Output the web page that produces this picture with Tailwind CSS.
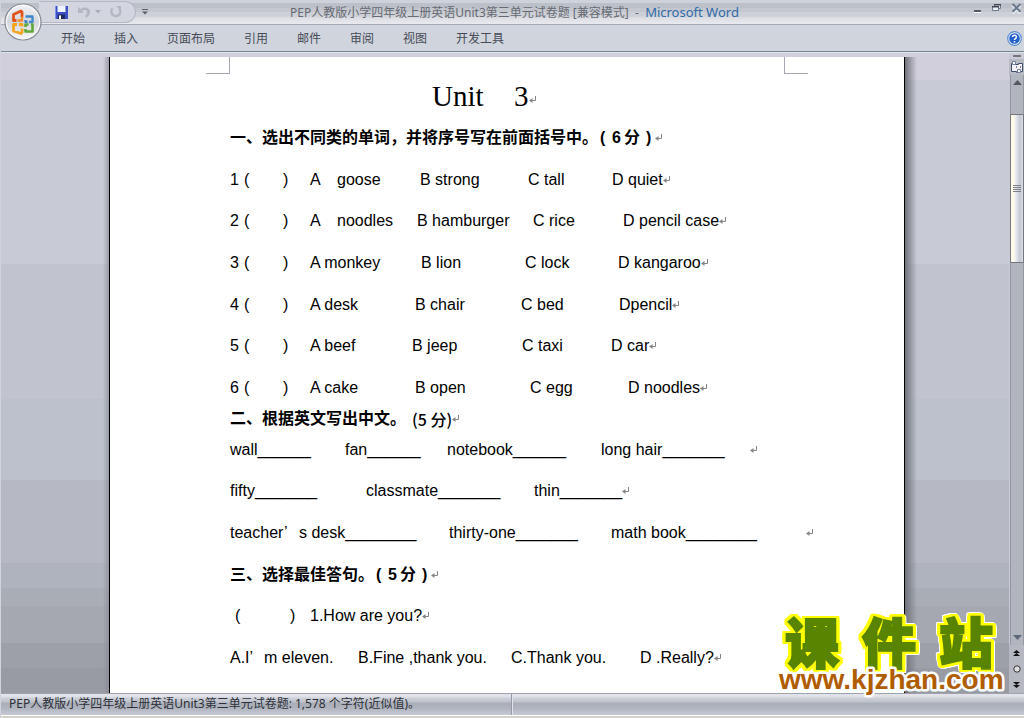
<!DOCTYPE html>
<html lang="zh-CN">
<head>
<meta charset="utf-8">
<title>PEP人教版小学四年级上册英语Unit3第三单元试卷题 - Microsoft Word</title>
<script src="https://cdn.jsdelivr.net/npm/@tailwindcss/browser@4"></script>
</head>
<body class="relative flex h-screen flex-col overflow-hidden bg-[#d0d4dd] pl-px font-['Noto_Sans','Noto_Sans_CJK_SC',sans-serif] text-xs text-[#464b57]">

<svg class="hidden" aria-hidden="true">
  <symbol id="ret" viewBox="0 0 8 8"><path d="M6.500 0v4.500H2" fill="none" stroke="#858585"/><path d="M0 4.500 3.500 2v5z" fill="#858585"/></symbol>
</svg>

<!-- Office button -->
<button aria-label="Office 按钮" class="absolute left-1 top-[3px] z-10 size-[38px]">
  <svg viewBox="0 0 38 38" class="size-full">
    <defs>
      <linearGradient id="orb" x1="0" y1="0" x2="0" y2="1"><stop offset="0" stop-color="#f2f3f5"/><stop offset=".5" stop-color="#d3d6dc"/><stop offset=".75" stop-color="#e6e7ea"/><stop offset="1" stop-color="#f8f8f9"/></linearGradient>
    </defs>
    <circle cx="19" cy="19" r="18" fill="url(#orb)" stroke="#878b94" stroke-width="1.2"/>
    <circle cx="19" cy="19" r="16.6" fill="none" stroke="#f7f8fa" stroke-width="1.2"/>
    <g fill="none" stroke-linejoin="round">
      <path d="M12.500 17.500H9.500v-6L17 8l1 1v5" stroke="#e0521c" stroke-width="2.800"/>
      <path d="M18 13.500v4h-4.500" stroke="#f08a2b" stroke-width="2.400"/>
      <path d="M21.500 13.500h7v5.500h-3.500m-3.500-2v2h2" stroke="#3f86cc" stroke-width="2.300"/>
      <path d="M13 21.500H9.500v6.500l7.500 2.500 1-1v-4m0-2v-2h-3" stroke="#f3a51f" stroke-width="2.800"/>
      <path d="M21.500 24v-2.500h3m2.500 0h1.500v7h-7v-2.500" stroke="#5fa83a" stroke-width="2.600"/>
    </g>
  </svg>
</button>

<!-- Title bar -->
<header class="flex h-[25px] shrink-0 items-start border-b border-[#a6aab4] bg-[linear-gradient(#ced2da_0_3px,#bcc0c8_3px_8px,#c4c7ce_8px_12px,#cdd0d6_12px_16px,#dcdee3_18px,#e9eaef_24px)]">
  <div class="mt-px ml-[38px] flex h-[22px] w-[97px] shrink-0 items-center rounded-r-full border border-[#b4b8c2] border-l-transparent bg-[#d3d6de] pl-[14px]">
    <button aria-label="保存"><svg class="size-[15px]" viewBox="0 0 15 15"><path d="M1 1h13v13H2l-1-1z" fill="#3a4fc4"/><path d="M3.500 1h8v6h-8z" fill="#eef2ff"/><path d="M4 9.500h7V14H4z" fill="#20285e"/><path d="M5 10.500h2V14H5z" fill="#fff"/><path d="M1 1h1v12H1z" fill="#7f90ea"/></svg></button>
    <button aria-label="撤消" class="ml-2"><svg class="size-[14px]" viewBox="0 0 14 14"><path d="M1 2v6h6L5 6c3-2 5-1 5 1s-1 3-2 4l1 2c3-2 4-4 4-6 0-4-5-6-9-3z" fill="#b3b7c4"/></svg></button>
    <button aria-label="撤消选项" class="ml-1"><svg class="h-1 w-[6px]" viewBox="0 0 6 4"><path d="M0 0h6L3 3.500z" fill="#a8acb8"/></svg></button>
    <button aria-label="重复" class="ml-2"><svg class="size-[14px]" viewBox="0 0 14 14"><path d="M7 1h5v5l-1.500-1.500" fill="#b3b7c4"/><path d="M3.500 3.500a4.500 4.500 0 1 0 7 .5" fill="none" stroke="#b3b7c4" stroke-width="2.500"/></svg></button>
  </div>
  <button aria-label="自定义快速访问工具栏" class="mt-[9px] ml-[6px]"><svg class="block size-[6px]" viewBox="0 0 6 6"><path d="M0 0h6v1H0zM0 2.500h6L3 5.500z" fill="#5a5e68"/></svg></button>
  <h1 class="flex-1 pl-[2px] text-center text-xs leading-[25px] whitespace-pre text-[#666a73]">PEP人教版小学四年级上册英语Unit3第三单元试卷题 [兼容模式]  -  <span class="text-[13px] text-[#2f6aab]">Microsoft Word</span></h1>
  <div class="flex w-[145px] shrink-0 items-start justify-end gap-[9px] pt-[3px] pr-[2px]">
    <button aria-label="最小化"><svg class="h-3 w-2" viewBox="0 0 8 12"><path d="M0 7h7v2H0z" fill="#555a66"/><path d="M0 9h7v1H0z" fill="#fff"/></svg></button>
    <button aria-label="还原"><svg class="h-3 w-[11px]" viewBox="0 0 11 12"><path d="M3.500 1.500h6v4h-6z" fill="#dde1ea" stroke="#6c7a90"/><path d="M3 1h7v1.500H3z" fill="#454955"/><path d="M1.500 3.500h6v4h-6z" fill="#eef0f5" stroke="#6c7a90"/><path d="M1 3h7v1.500H1z" fill="#454955"/></svg></button>
    <button aria-label="关闭"><svg class="h-3 w-[11px]" viewBox="0 0 11 12"><path d="M1.500 2l8 8m0-8l-8 8" stroke="#fff" stroke-width="2.500"/><path d="M1.500 1l8 8m0-8l-8 8" stroke="#6b7890" stroke-width="2.200"/></svg></button>
  </div>
</header>

<!-- Ribbon tabs -->
<nav class="flex h-[28px] shrink-0 items-center gap-[29px] border-b border-[#dde7ea] pr-[2px] pl-[60px] shadow-[inset_0_-1px_#7c838c]">
  <button>开始</button><button>插入</button><button>页面布局</button><button>引用</button><button>邮件</button><button>审阅</button><button>视图</button><button>开发工具</button>
  <button aria-label="帮助" class="ml-auto"><svg class="size-[15px]" viewBox="0 0 15 15"><circle cx="7.500" cy="7.500" r="6.800" fill="#e6f0fb" stroke="#5b8fd0" stroke-width="1.200"/><circle cx="7.500" cy="7.500" r="5.300" fill="#2360cf"/><path d="M5.500 6c0-2.500 4-2.500 4 0 0 1.300-2 1.300-2 3" fill="none" stroke="#fff" stroke-width="1.500"/><path d="M6.700 10h1.600v1.500H6.700z" fill="#fff"/></svg></button>
</nav>

<!-- Workspace -->
<div class="flex min-h-0 flex-1">
  <main class="flex min-w-0 flex-1 bg-[linear-gradient(#d1cfdb_0_27px,#c8cbd5_27px_211px,#c1c4ce_211px_346px,#bcc1cb_346px_427px,#b6b9c3_427px_510px,#afb3bd_510px_535px,#a9adb6_535px_553px,#a5a8b1_553px_590px,#9ea0a9_590px_615px,#999ba4_615px)] pt-1 pl-1">
    <div class="ml-auto w-3 bg-linear-to-r from-transparent from-50% to-[#858894]/70"></div>
    <article class="w-[796px] shrink-0 border-x border-black bg-white pr-[72px] pl-24 font-['Liberation_Sans','Noto_Sans_CJK_SC',sans-serif] text-base leading-5 text-black">
      <div class="flex h-[18px] items-start justify-between pr-6" aria-hidden="true">
        <div class="h-[17px] w-6 border-r border-b border-[#a5a7b3]"></div>
        <div class="h-[17px] w-6 border-b border-l border-[#a5a7b3]"></div>
      </div>
      <div class="pl-6 whitespace-nowrap">
        <h2 class="flex h-[42px] items-center pl-[202px] font-['Liberation_Serif',serif] text-[29px]"><span class="w-[82px]">Unit</span>3<svg class="mt-2 size-2"><use href="#ret"/></svg></h2>
        <h3 class="flex h-[42px] items-center font-bold">一、选出不同类的单词，并将序号写在前面括号中。<span class="w-[14px] pl-[2px]">(</span><span class="w-3">6</span><span class="w-[22px]">分</span>)<svg class="ml-1 size-2"><use href="#ret"/></svg></h3>

        <ol class="grid h-[250px] grid-rows-6 items-center">
          <li class="flex items-center"><span class="w-[14px]">1</span><span class="w-[39px]">(</span><span class="w-[27px]">)</span><span class="w-[27px]">A</span><span class="w-[83px]">goose</span><span class="w-[108px]">B strong</span><span class="w-[84px]">C tall</span>D quiet<svg class="size-2"><use href="#ret"/></svg></li>
          <li class="flex items-center"><span class="w-[14px]">2</span><span class="w-[39px]">(</span><span class="w-[27px]">)</span><span class="w-[27px]">A</span><span class="w-[80px]">noodles</span><span class="w-[116px]">B hamburger</span><span class="w-[90px]">C rice</span>D pencil case<svg class="size-2"><use href="#ret"/></svg></li>
          <li class="flex items-center"><span class="w-[14px]">3</span><span class="w-[39px]">(</span><span class="w-[27px]">)</span><span class="w-[111px]">A monkey</span><span class="w-[104px]">B lion</span><span class="w-[93px]">C lock</span>D kangaroo<svg class="size-2"><use href="#ret"/></svg></li>
          <li class="flex items-center"><span class="w-[14px]">4</span><span class="w-[39px]">(</span><span class="w-[27px]">)</span><span class="w-[105px]">A desk</span><span class="w-[106px]">B chair</span><span class="w-[98px]">C bed</span>Dpencil<svg class="size-2"><use href="#ret"/></svg></li>
          <li class="flex items-center"><span class="w-[14px]">5</span><span class="w-[39px]">(</span><span class="w-[27px]">)</span><span class="w-[102px]">A beef</span><span class="w-[110px]">B jeep</span><span class="w-[89px]">C taxi</span>D car<svg class="size-2"><use href="#ret"/></svg></li>
          <li class="flex items-center"><span class="w-[14px]">6</span><span class="w-[39px]">(</span><span class="w-[27px]">)</span><span class="w-[105px]">A cake</span><span class="w-[115px]">B open</span><span class="w-[98px]">C egg</span>D noodles<svg class="size-2"><use href="#ret"/></svg></li>
        </ol>

        <h3 class="flex h-5 items-center font-bold"><span class="w-[182px]">二、根据英文写出中文。</span><span class="font-['Noto_Sans_CJK_SC',sans-serif] font-medium">(5 分)</span><svg class="size-2"><use href="#ret"/></svg></h3>

        <div class="grid h-[250px] grid-rows-6 items-center">
          <p class="flex items-center"><span class="w-[115px]">wall______</span><span class="w-[102px]">fan______</span><span class="w-[154px]">notebook______</span><span class="w-[149px]">long hair_______</span><svg class="size-2"><use href="#ret"/></svg></p>
          <p class="flex items-center"><span class="w-[136px]">fifty_______</span><span class="w-[168px]">classmate_______</span>thin_______<svg class="size-2"><use href="#ret"/></svg></p>
          <p class="flex items-center"><span class="w-[69px]">teacher’</span><span class="w-[150px]">s desk________</span><span class="w-[162px]">thirty-one_______</span><span class="w-[195px]">math book________</span><svg class="size-2"><use href="#ret"/></svg></p>
          <h3 class="flex items-center font-bold">三、选择最佳答句。<span class="w-[14px] pl-[2px]">(</span><span class="w-3">5</span><span class="w-[22px]">分</span>)<svg class="ml-1 size-2"><use href="#ret"/></svg></h3>
          <p class="flex items-center pl-[5px]"><span class="w-[55px]">(</span><span class="w-[20px]">)</span>1.How are you?<svg class="size-2"><use href="#ret"/></svg></p>
          <p class="flex items-center"><span class="w-[34px]">A.I’</span><span class="w-[94px]">m eleven.</span><span class="w-[153px]">B.Fine ,thank you.</span><span class="w-[129px]">C.Thank you.</span>D .Really?<svg class="size-2"><use href="#ret"/></svg></p>
        </div>
      </div>
    </article>
    <div class="mr-auto w-3 bg-linear-to-r from-[#70737c] to-transparent"></div>
  </main>

  <!-- Vertical scroll bar -->
  <aside class="flex w-[15px] shrink-0 flex-col items-center bg-[#c8cbd5]">
    <div class="mt-[2px] h-[2px] w-2 bg-[#75757a]"></div>
    <button aria-label="标尺" class="mt-[2px] h-4 w-full bg-[#b7bac3]"><svg class="h-4 w-[15px]" viewBox="0 0 15 16"><path d="M2.500 4.500h2v1h5v-1h4v8h-2v1h-4v-1h-5z" fill="#f3f0f6" stroke="#3d4d6b"/><path d="M3.500 2.500h3v3h-3zM8.500 10.500h3v3h-3z" fill="#fff" stroke="#7480a0"/><path d="M7 7h1v2H7zM11 7h1v2h-1z" fill="#7480a0"/></svg></button>
    <div class="flex min-h-0 w-[14px] flex-1 flex-col items-center self-end border-x border-[#94979f] bg-[#b1b5be]">
      <button aria-label="向上滚动" class="flex h-[39px] w-full justify-center pt-[5px]"><svg class="h-[5px] w-[9px]" viewBox="0 0 9 5"><path d="M0 5h9L4.500 0z" fill="#55575c"/></svg></button>
      <div class="flex h-[149px] w-[14px] shrink-0 items-center justify-center rounded-[1px] border border-[#74767c] bg-[linear-gradient(90deg,#fdfaea_0_3px,#e6e7f0_5px,#d5d8e2_7px,#c3c8d2_9px,#dcdee6)]">
        <div class="h-[7px] w-2 bg-[repeating-linear-gradient(#7d7f84_0_1px,transparent_1px_2px)]"></div>
      </div>
      <button aria-label="向下滚动" class="mt-auto flex h-[10px] w-full justify-center"><svg class="h-[5px] w-[9px]" viewBox="0 0 9 5"><path d="M0 0h9L4.500 5z" fill="#5d6878"/></svg></button>
    </div>
    <div class="flex h-12 w-full flex-col items-center justify-between bg-[#b5b8c1] py-[5px]">
      <button aria-label="上一页"><svg class="block size-[7px]" viewBox="0 0 7 7"><path d="M0 3h7L3.500 0zM0 6h7L3.500 3z" fill="#111"/></svg></button>
      <button aria-label="选择浏览对象"><svg class="block size-2" viewBox="0 0 8 8"><circle cx="4" cy="4" r="3.200" fill="#dedede" stroke="#333"/></svg></button>
      <button aria-label="下一页"><svg class="block size-[7px]" viewBox="0 0 7 7"><path d="M0 1h7L3.500 4zM0 4h7L3.500 7z" fill="#111"/></svg></button>
    </div>
  </aside>
</div>

<!-- Status bar -->
<footer class="h-[25px] shrink-0 border-t border-[#a0a2ac] bg-[#d5d2c9]">
  <div class="flex h-[22px] border-b border-white bg-[linear-gradient(#e2e3ea_0_2px,#c9ccd5_5px,#bfc3cc_8px,#aaaeb8_9px,#b0b4be_14px,#c7cad5_21px)] pl-2 leading-[20px] text-[#2d3038]">
    <p class="w-[503px] border-r border-[#979aa4] shadow-[1px_0_#e2e3ea]">PEP人教版小学四年级上册英语Unit3第三单元试卷题: 1,578 个字符(近似值)。</p>
  </div>
</footer>

<!-- Site watermark -->
<svg class="absolute right-4 bottom-5 h-[84px] w-[236px] overflow-visible" viewBox="0 0 236 84" role="img" aria-label="课件站 www.kjzhan.com">
  <text x="13 90 167" y="50" fill="#588400" stroke="#588400" stroke-width="2" font-family="Noto Sans CJK SC, sans-serif" font-weight="900" font-size="54" class="[filter:drop-shadow(2px_0_#ff0)_drop-shadow(-2px_0_#ff0)_drop-shadow(0_2px_#ff0)_drop-shadow(0_-2px_#ff0)_drop-shadow(1px_0_#ff0)_drop-shadow(-1px_0_#ff0)_drop-shadow(1px_1px_#fff)_drop-shadow(-1px_-1px_#fff)]">课件站</text>
  <text x="7" y="75" fill="#b05c00" stroke="#fff" stroke-width="5" stroke-linejoin="round" paint-order="stroke" font-family="Liberation Sans, sans-serif" font-weight="700" font-size="28">www.kjzhan.com</text>
</svg>
</body>
</html>
